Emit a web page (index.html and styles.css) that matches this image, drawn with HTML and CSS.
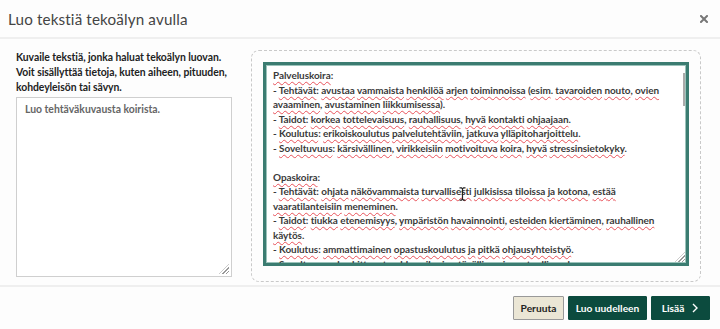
FILE: index.html
```html
<!DOCTYPE html>
<html lang="fi">
<head>
<meta charset="utf-8">
<link rel="stylesheet" href="styles.css">
</head>
<body>
<div class="dialog">
  <header class="head">
    <h1 class="title">Luo tekstiä tekoälyn avulla</h1>
    <span class="close" aria-label="Sulje">
      <svg width="8" height="8" viewBox="0 0 8 8"><path d="M1 1L7 7M7 1L1 7" stroke="#777" stroke-width="2" stroke-linecap="square"/></svg>
    </span>
  </header>
  <main class="body">
    <section class="left">
      <p class="prompt"><span class="ln">Kuvaile tekstiä, jonka haluat tekoälyn luovan.</span> <span class="ln">Voit sisällyttää tietoja, kuten aiheen, pituuden,</span> <span class="ln">kohdeyleisön tai sävyn.</span></p>
      <div class="input">
        <span class="placeholder">Luo tehtäväkuvausta koirista.</span>
        <span class="grip"></span>
      </div>
    </section>
    <section class="right">
      <div class="result">
        <div class="text">
<p><u>Palveluskoira</u>:</p>
<p>- <u>Tehtävät</u>: <u>avustaa</u> <u>vammaista</u> <u>henkilöä</u> <u>arjen</u> <u>toiminnoissa</u> (<u>esim</u>. <u>tavaroiden</u> <u>nouto</u>, <u>ovien</u> <u>avaaminen</u>, <u>avustaminen</u> <u>liikkumisessa</u>).</p>
<p>- <u>Taidot</u>: <u>korkea</u> <u>tottelevaisuus</u>, <u>rauhallisuus</u>, <u>hyvä</u> <u>kontakti</u> <u>ohjaajaan</u>.</p>
<p>- <u>Koulutus</u>: <u>erikoiskoulutus</u> <u>palvelutehtäviin</u>, <u>jatkuva</u> <u>ylläpitoharjoittelu</u>.</p>
<p>- <u>Soveltuvuus</u>: <u>kärsivällinen</u>, <u>virikkeisiin</u> <u>motivoituva</u> <u>koira</u>, <u>hyvä</u> <u>stressinsietokyky</u>.</p>
<p class="blank">&nbsp;</p>
<p><u>Opaskoira</u>:</p>
<p>- <u>Tehtävät</u>: <u>ohjata</u> <u>näkövammaista</u> <u>turvallisesti</u> <u>julkisissa</u> <u>tiloissa</u> <u>ja</u> <u>kotona</u>, <u>estää</u> <u>vaaratilanteisiin</u> <u>meneminen</u>.</p>
<p>- <u>Taidot</u>: <u>tiukka</u> <u>etenemisyys</u>, <u>ympäristön</u> <u>havainnointi</u>, <u>esteiden</u> <u>kiertäminen</u>, <u>rauhallinen</u> <u>käytös</u>.</p>
<p>- <u>Koulutus</u>: <u>ammattimainen</u> <u>opastuskoulutus</u> <u>ja</u> <u>pitkä</u> <u>ohjausyhteistyö</u>.</p>
<p>- <u>Soveltuvuus</u>: <u>keskittynyt</u>, <u>rohkea</u>, <u>ihmisystävällinen</u> <u>ja</u> <u>vastuullinen</u> <u>luonne</u>.</p>
        </div>
        <span class="scroll"></span>
        <span class="grip"></span>
        <svg class="cursor" width="7" height="14" viewBox="0 0 7 14"><path d="M0.5 0.8H2.5L3.5 1.8L4.5 0.8H6.5M3.5 1.8V12.2M0.5 13.2H2.5L3.5 12.2L4.5 13.2H6.5" fill="none" stroke="#222" stroke-width="1.2"/></svg>
      </div>
    </section>
  </main>
  <footer class="foot">
    <button class="btn secondary">Peruuta</button>
    <button class="btn primary redo">Luo uudelleen</button>
    <button class="btn primary more">Lisää <svg width="8" height="10" viewBox="0 0 8 10"><path d="M2 1L6 5L2 9" fill="none" stroke="#fff" stroke-width="1.4"/></svg></button>
  </footer>
</div>
</body>
</html>
```
FILE: styles.css
```css
* { box-sizing: border-box; }
html, body { margin: 0; padding: 0; }
body {
  width: 720px;
  height: 329px;
  overflow: hidden;
  background: #fdfdfd;
  font-family: Lato, "Noto Sans", sans-serif;
  color: #333;
}
.dialog { display: flex; flex-direction: column; height: 329px; }
.head {
  height: 39px;
  border-bottom: 2px solid #efefef;
  display: flex;
  align-items: center;
  justify-content: space-between;
  padding: 0 12px 0 8px;
}
.title {
  margin: 0;
  font-size: 15.2px;
  font-weight: 400;
  color: #444;
  letter-spacing: 0.15px;
}
.close { display: flex; }
.body {
  height: 248px;
  display: flex;
  gap: 19px;
  padding: 11px 19px 0 16px;
  border-bottom: 2px solid #efefef;
}
.left { width: 216px; display: flex; flex-direction: column; }
.prompt {
  margin: 0 0 2px;
  font-size: 10.4px;
  line-height: 15px;
  font-weight: 700;
  color: #222;
  letter-spacing: -0.05px;
  width: 225px;
}
.ln { display: block; white-space: nowrap; }
.input {
  position: relative;
  height: 180px;
  border: 1px solid #cfcfcf;
  background: #fff;
  padding: 4px 8px;
  font-size: 10.4px;
  line-height: 14px;
}
.placeholder { font-weight: 700; color: #666; }
.grip {
  position: absolute;
  right: 2px;
  bottom: 2px;
  width: 10px;
  height: 10px;
  background: repeating-linear-gradient(135deg, transparent 0 1.5px, #999 1.5px 2.5px);
  clip-path: polygon(100% 0, 100% 100%, 0 100%);
}
.right { flex: 1; }
.result {
  position: relative;
  height: 232px;
  border: 1.5px dashed #c9c9c9;
  border-radius: 8px;
  padding: 11px 11px 15px 11px;
}
.text {
  height: 204px;
  overflow: hidden;
  border: 3px solid #3b7c71;
  box-shadow: inset 0 0 0 1px #9cc3bb;
  background: #fff;
  padding: 3px 8px 0 7px;
  font-size: 9.95px;
  line-height: 14.5px;
  font-weight: 700;
  color: #3a3a3a;
  letter-spacing: -0.05px;
}
.text p { margin: 0; }
.text u {
  text-decoration: underline wavy #e8525a;
  text-decoration-thickness: 1px;
  text-underline-offset: 2px;
}
.scroll {
  position: absolute;
  left: 431px;
  top: 22px;
  width: 2px;
  height: 33px;
  background: #aaa;
}
.result .grip { right: 15px; bottom: 19px; }
.cursor {
  position: absolute;
  left: 207px;
  top: 136px;
}
.foot {
  flex: 1;
  display: flex;
  justify-content: flex-end;
  align-items: center;
  gap: 4px;
  padding: 0 10px 0 0;
}
.btn {
  height: 24px;
  font-family: Lato, sans-serif;
  font-size: 10.2px;
  font-weight: 700;
  border-radius: 1px;
  padding: 0;
  display: flex;
  align-items: center;
  justify-content: center;
  gap: 7px;
}
.secondary { background: #ebe6d5; border: 1px solid #999; color: #222; width: 51px; }
.primary { background: #0c4b3e; border: 1px solid #0c4b3e; color: #fff; }
.redo { width: 79px; }
.more { width: 59px; }
```
